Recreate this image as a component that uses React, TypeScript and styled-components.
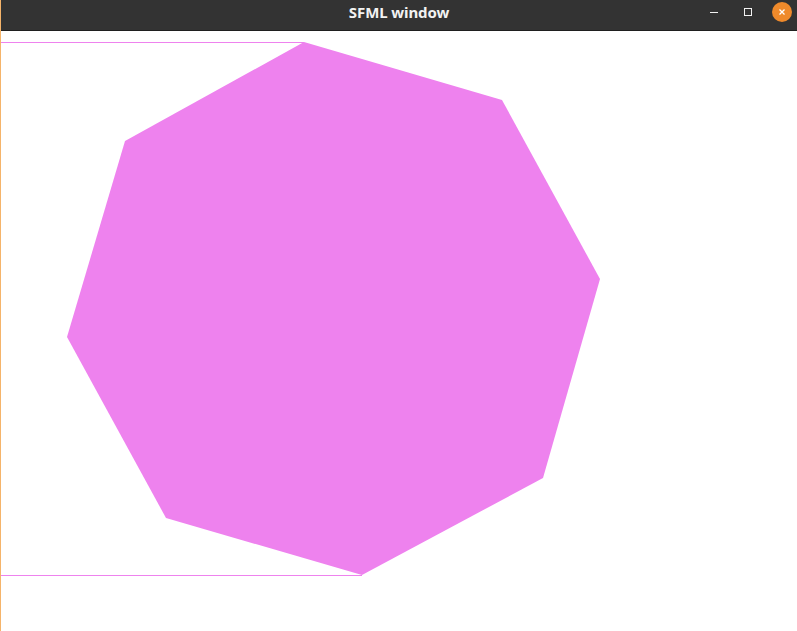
import React from "react";
import styled, { createGlobalStyle } from "styled-components";

const Global = createGlobalStyle`
  html, body { margin: 0; padding: 0; background: #ffffff; }
  body { font-family: "Noto Sans", "DejaVu Sans", sans-serif; }
`;

const Window = styled.div`
  width: 797px;
  height: 631px;
  display: flex;
  flex-direction: column;
  box-sizing: border-box;
  border-left: 1px solid #f5b46a;
  overflow: hidden;
`;

const TitleBar = styled.div`
  height: 31px;
  flex: 0 0 31px;
  box-sizing: border-box;
  padding-bottom: 6px;
  background: #333333;
  border-bottom: 1px solid #1f1f1f;
  display: grid;
  grid-template-columns: 1fr auto 1fr;
  align-items: center;
`;

const Title = styled.div`
  grid-column: 2;
  color: #f2f2f2;
  font-weight: 700;
  font-size: 15px;
  line-height: 18px;
  letter-spacing: -0.1px;
`;

const Controls = styled.div`
  grid-column: 3;
  justify-self: end;
  display: flex;
  align-items: center;
  gap: 14px;
  padding-right: 5px;
`;

const CtrlButton = styled.div<{ $close?: boolean }>`
  width: 20px;
  height: 20px;
  border-radius: 50%;
  display: flex;
  align-items: center;
  justify-content: center;
  background: ${(p) => (p.$close ? "#ef8a2b" : "transparent")};
`;

const Canvas = styled.div`
  flex: 1;
  background: #ffffff;
`;

const Drawing = styled.svg`
  display: block;
`;

const pts: [number, number][] = [
  [304, 42],
  [502, 100],
  [600, 279],
  [543, 478],
  [362, 575],
  [166, 518],
  [67, 337],
  [125, 141],
];

export default function App() {
  const poly = pts.map(([x, y]) => `${x},${y}`).join(" ");
  return (
    <>
      <Global />
      <Window>
        <TitleBar>
          <Title>SFML window</Title>
          <Controls>
            <CtrlButton>
              <svg width="10" height="10" viewBox="0 0 10 10">
                <rect x="1" y="5" width="8" height="1" fill="#f2f2f2" />
              </svg>
            </CtrlButton>
            <CtrlButton>
              <svg width="10" height="10" viewBox="0 0 10 10">
                <rect x="1.5" y="1.5" width="7" height="7" fill="none" stroke="#f2f2f2" strokeWidth="1" />
              </svg>
            </CtrlButton>
            <CtrlButton $close>
              <svg width="10" height="10" viewBox="0 0 10 10">
                <path d="M2.5 2.5 L7.5 7.5 M7.5 2.5 L2.5 7.5" stroke="#ffffff" strokeWidth="1.3" />
              </svg>
            </CtrlButton>
          </Controls>
        </TitleBar>
        <Canvas>
          <Drawing width="796" height="600" viewBox="1 31 796 600">
            <line x1="1" y1="42.5" x2="304" y2="42.5" stroke="#ee82ee" strokeWidth="1" />
            <line x1="1" y1="575.5" x2="362" y2="575.5" stroke="#ee82ee" strokeWidth="1" />
            <polygon points={poly} fill="#ee82ee" />
          </Drawing>
        </Canvas>
      </Window>
    </>
  );
}
